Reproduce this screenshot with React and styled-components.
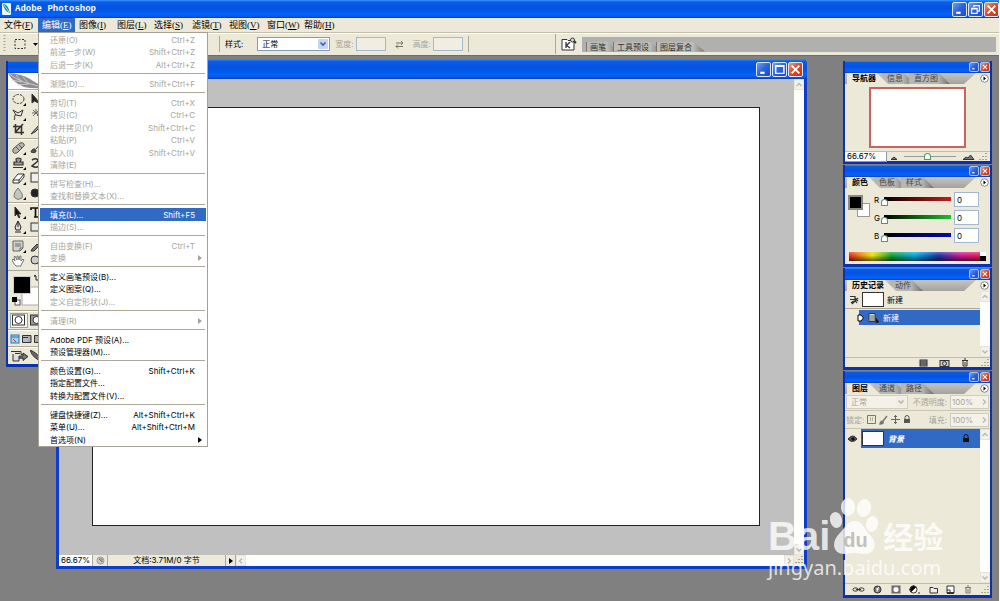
import React from 'react';
import styled, { createGlobalStyle, css } from 'styled-components';

const UI = `Inter, "Noto Sans CJK SC", sans-serif`;
const SONG = `"Liberation Serif", "Noto Sans CJK SC", serif`;
const BEIGE = '#ece9d8';
const NAVY = '#0a32b0';

const GlobalStyle = createGlobalStyle`
  * { box-sizing: border-box; }
  body { margin: 0; background: #808080; font: 8px/12px ${UI}; color: #000; }
  button, input, select { font: inherit; color: inherit; margin: 0; padding: 0; border: 0; border-radius: 0; background: none; }
  ul { margin: 0; padding: 0; list-style: none; }
  svg { display: block; flex: none; }
`;

const titleFill = css`
  background: linear-gradient(#3c94fa 0, #0a5be8 12%, #0453e0 45%, #0562f8 80%, #0656ec 92%, #0438b4 100%);
`;

const Screen = styled.div`
  position: relative;
  display: flex;
  flex-direction: column;
  min-height: 100vh;
  overflow: hidden;
  border-right: 1px solid #f4f4f0;
  border-bottom: 1px solid #b8b8b8;
`;

const AppTitle = styled.header`
  ${titleFill}
  display: flex;
  align-items: center;
  gap: 4px;
  height: 18px;
  padding: 0 0 0 2px;
  color: #fff;
  h1 { flex: 1; margin: 0; font: bold 9px/16px "Liberation Mono", monospace; }
`;

const ControlGroup = styled.div`
  display: flex;
  gap: ${p => p.$gap ?? 2}px;
`;

const WinButton = styled.button`
  display: grid;
  place-items: center;
  width: ${p => p.$size}px;
  height: ${p => p.$size}px;
  border: 1px solid ${p => (p.$size > 12 ? '#dbe6fb' : '#a9c2f2')};
  border-radius: 2px;
  background: ${p => (p.$close
    ? 'linear-gradient(135deg, #f09a80, #d8492a 50%, #b8391e)'
    : 'linear-gradient(135deg, #6f9df8, #2c61dc 50%, #1c4cc8)')};
`;

const MenuBar = styled.nav`
  display: flex;
  height: 15px;
  background: ${BEIGE};
  border-bottom: 1px solid #c2bfae;
  font: 9px/14px ${SONG};
`;

const MenuEntry = styled.div`
  position: relative;
  width: 38px;
  &:nth-child(even) { width: 37px; }
`;

const MenuButton = styled.button`
  width: 100%;
  height: 14px;
  padding-left: 4px;
  text-align: left;
  white-space: nowrap;
  color: ${p => (p.$open ? '#fff' : '#000')};
  background: ${p => (p.$open ? '#316ac5' : 'transparent')};
`;

const Dropdown = styled.div`
  position: absolute;
  z-index: 20;
  top: 14px;
  left: 0;
  width: 170px;
  border: 1px solid #a5a294;
  background: #fff;
  font: 8px/12px ${UI};
`;

const DropGroup = styled.ul`
  padding: 0 1px;
  & + & { position: relative; margin-top: 6px; }
  & + &::before {
    content: '';
    position: absolute;
    top: -4px;
    left: 2px;
    right: 2px;
    height: 1px;
    background: #aca899;
  }
`;

const DropRow = styled.li`
  height: 13px;
  &:nth-child(even) { height: 12px; }
`;

const DropItem = styled.button`
  display: flex;
  justify-content: space-between;
  align-items: center;
  width: 100%;
  height: 100%;
  padding: 0 ${p => (p.$sub ? 4 : 11)}px 0 10px;
  white-space: nowrap;
  color: ${p => (p.$hot ? '#fff' : p.disabled ? '#a6a498' : '#000')};
  background: ${p => (p.$hot ? '#316ac5' : 'transparent')};
`;

const OptionsBar = styled.section`
  display: flex;
  align-items: center;
  height: 23px;
  padding: 0 3px 1px 0;
  background: ${BEIGE};
  border-top: 1px solid #fff;
  border-bottom: 1px solid #6e6e68;
  white-space: nowrap;
`;

const ToolChoice = styled.div`
  display: flex;
  align-items: center;
  gap: 6px;
  width: 219px;
  padding-left: 3px;
`;

const StyleOptions = styled.div`
  display: flex;
  align-items: center;
  width: 250px;
  height: 16px;
  padding-left: 5px;
  border-left: 1px solid #aca899;
  border-right: 1px solid #aca899;
`;

const Field = styled.label`
  display: flex;
  align-items: center;
  gap: ${p => p.$gap ?? 2}px;
  margin-left: ${p => p.$lead ?? 0}px;
  color: ${p => (p.$off ? '#a6a498' : '#000')};
`;

const SelectBox = styled.span`
  position: relative;
  display: block;
  width: ${p => p.$width}px;
  height: 14px;
  border: 1px solid ${p => (p.$off ? '#d0cdbd' : '#7f9db9')};
  background: ${p => (p.$off ? '#f4f2e8' : '#fff')};
  select { display: block; width: 100%; height: 12px; padding-left: 4px; line-height: 12px; appearance: none; opacity: 1; color: inherit; }
  svg { position: absolute; top: 0; right: 0; pointer-events: none; }
`;

const TextBox = styled.input`
  width: ${p => p.$width}px;
  height: ${p => p.$height ?? 14}px;
  padding-left: 2px;
  border: 1px solid #a3b8cc;
  background: ${p => (p.disabled ? '#f0eee2' : '#fff')};
`;

const Swap = styled.button`
  margin: 0 9px;
  color: #77756a;
`;

const BrowseButton = styled.button`
  display: grid;
  place-items: center;
  width: 27px;
  height: 20px;
  margin-left: 86px;
  border-left: 1px solid #aca899;
`;

const PaletteWell = styled.div`
  display: flex;
  flex: 1;
  align-items: flex-end;
  height: 15px;
  padding-left: 4px;
  background: #b0b0ae;
`;

const WellTab = styled.button`
  height: 10px;
  padding: 0 13px 0 3px;
  margin-right: -6px;
  line-height: 10px;
  color: #333;
  background: linear-gradient(to right, #bcbcb8 calc(100% - 12px), #77776f);
  clip-path: polygon(0 0, calc(100% - 12px) 0, 100% 100%, 0 100%);
  border-left: 1px solid #777;
`;

const Workspace = styled.main`
  display: flex;
  flex: 1;
  align-items: stretch;
  padding: 3px 7px 3px 6px;
  background: #808080;
`;

const Toolbox = styled.aside`
  align-self: flex-start;
  width: 46px;
  margin: 2px 4px 0 0;
  border: solid ${NAVY};
  border-width: 0 2px 3px;
  background: ${BEIGE};
`;

const ToolboxTitle = styled.div`
  ${titleFill}
  height: 12px;
`;

const Feather = styled.div`
  height: 17px;
  background: #fff;
  border-bottom: 1px solid #aca899;
`;

const ToolGrid = styled.div`
  display: grid;
  grid-template-columns: 18px 18px;
  grid-auto-rows: ${p => p.$row ?? 15}px;
  padding: 1px 0 1px 2px;
  border-bottom: 1px solid #aca899;
  border-top: 1px solid #fff;
  &:last-child { border-bottom: 0; }
`;

const ToolButton = styled.button`
  display: grid;
  place-items: center;
  border: ${p => (p.$on ? '1px solid #8aa' : '0')};
  background: ${p => (p.$on ? '#f8f8f2' : 'transparent')};
`;

const Swatches = styled.div`
  height: 40px;
  padding: 4px 0 0 3px;
  border-bottom: 1px solid #aca899;
`;

const DocWindow = styled.section`
  display: flex;
  flex: 1;
  flex-direction: column;
  min-width: 0;
  margin: 0 36px 29px 0;
  border: solid #0d3dca;
  border-width: 0 3px 3px;
  border-radius: 5px 5px 0 0;
  background: #c0c0c0;
`;

const DocTitle = styled.header`
  ${titleFill}
  display: flex;
  justify-content: flex-end;
  align-items: center;
  height: 20px;
  margin: 0 -3px;
  padding-right: 4px;
  border-radius: 5px 5px 0 0;
`;

const DocBody = styled.div`
  display: flex;
  flex: 1;
`;

const Pasteboard = styled.div`
  display: flex;
  flex: 1;
  padding: 28px 34px 29px 33px;
`;

const Canvas = styled.div`
  flex: 1;
  border: 1px solid #222;
  background: #fff;
`;

const VScroll = styled.div`
  display: flex;
  flex-direction: column;
  justify-content: space-between;
  width: 10px;
  background: #fefefb;
`;

const ScrollButton = styled.button`
  display: grid;
  place-items: center;
  width: 10px;
  height: 11px;
  border: 1px solid #e6e4da;
  background: #f3f2ea;
`;

const StatusBar = styled.footer`
  display: flex;
  height: 11px;
  line-height: 11px;
  background: ${BEIGE};
  white-space: nowrap;
`;

const StatusCell = styled.div`
  display: grid;
  place-items: center;
  width: ${p => p.$width}px;
  border-right: 1px solid #aca899;
  background: ${p => (p.$white ? '#fff' : 'transparent')};
`;

const HScroll = styled.div`
  display: flex;
  flex: 1;
  justify-content: space-between;
  background: #fefefb;
`;

const Palettes = styled.aside`
  display: flex;
  flex-direction: column;
  gap: 1px;
  width: 149px;
  padding-top: 2px;
`;

const PanelFrame = styled.section`
  display: flex;
  flex-direction: column;
  flex: ${p => (p.$grow ? '1 0 227px' : '0 0 102px')};
  border: solid ${NAVY};
  border-width: 0 2px 3px;
  background: ${BEIGE};
`;

const PanelTitle = styled.header`
  ${titleFill}
  display: flex;
  justify-content: flex-end;
  align-items: center;
  height: 12px;
`;

const TabStrip = styled.div`
  display: flex;
  height: 11px;
  padding-left: 2px;
  background: linear-gradient(#c4c4c0, #a2a29e);
`;

const PanelTab = styled.button`
  position: relative;
  z-index: ${p => (p.$active ? 2 : 1)};
  height: 11px;
  margin-right: -6px;
  padding: 0 12px 0 5px;
  line-height: 11px;
  white-space: nowrap;
  font-weight: ${p => (p.$active ? 600 : 400)};
  color: ${p => (p.$active ? '#000' : '#444')};
  background: ${p => (p.$active ? BEIGE : 'linear-gradient(to right, #b6b6b2 calc(100% - 12px), #6f6f6a)')};
  clip-path: polygon(0 0, calc(100% - 11px) 0, 100% 100%, 0 100%);
`;

const Flyout = styled.button`
  display: flex;
  justify-content: flex-end;
  align-items: center;
  width: 26px;
  height: 11px;
  margin-left: auto;
  padding-right: 1px;
  background: ${BEIGE};
  clip-path: polygon(12px 0, 100% 0, 100% 100%, 0 100%);
`;

const PanelBody = styled.div`
  display: flex;
  flex: 1;
`;

const Thumbnail = styled.div`
  width: 97px;
  height: 61px;
  margin: 3px auto;
  border: 2px solid #c9635f;
  background: #fff;
`;

const PanelFooter = styled.footer`
  display: flex;
  align-items: center;
  justify-content: ${p => p.$justify ?? 'flex-start'};
  gap: ${p => p.$gap ?? 4}px;
  height: ${p => p.$height ?? 10}px;
  padding-left: ${p => p.$pad ?? 0}px;
  border-top: 1px solid #c0bdac;
`;

const ZoomValue = styled.input`
  width: 42px;
  height: 10px;
  padding-left: 2px;
  border: solid #7f9db9;
  border-width: 0 1px 1px 0;
  background: #fff;
  line-height: 9px;
`;

const Range = styled.input.attrs({ type: 'range' })`
  appearance: none;
  width: ${p => p.$width}px;
  height: ${p => p.$height}px;
  background: ${p => p.$fill} no-repeat center ${p => p.$at}px / calc(100% - 6px) ${p => p.$thick}px;
  &::-webkit-slider-thumb {
    appearance: none;
    width: 7px;
    height: 7px;
    margin-top: ${p => p.$drop}px;
    border: 1px solid #4d9a68;
    border-radius: 4px 4px 1px 1px;
    background: #fff;
  }
`;

const SwatchPair = styled.div`
  width: 29px;
  padding: 7px 0 0 3px;
`;

const ColorRows = styled.div`
  display: flex;
  flex-direction: column;
  gap: 3px;
  padding: 4px 10px 0 0;
`;

const ColorRow = styled.label`
  display: flex;
  align-items: center;
  height: 15px;
  span { width: 7px; }
`;

const Spectrum = styled.div`
  display: flex;
  height: 9px;
  margin: 0 4px 3px;
  background:
    linear-gradient(rgba(255,255,255,.3), rgba(255,255,255,0) 40%, rgba(0,0,0,.6)),
    linear-gradient(to right, #e02820, #f0e000 17%, #10a030 31%, #00a8e0 48%, #1838a8 65%, #d01890 82%, #e82040);
  &::after { content: ''; width: 6px; margin-left: auto; background: linear-gradient(#fff 50%, #000 50%); }
`;

const ListArea = styled.div`
  flex: 1;
`;

const HistoryRow = styled.div`
  display: flex;
  align-items: center;
  gap: ${p => p.$gap}px;
  height: ${p => p.$height}px;
  padding-left: ${p => p.$pad}px;
  border-bottom: ${p => (p.$on ? 0 : 1)}px solid #aca899;
  margin-bottom: ${p => (p.$on ? 0 : 1)}px;
  color: ${p => (p.$on ? '#fff' : '#000')};
  background: ${p => (p.$on ? `linear-gradient(to right, ${BEIGE} 14px, #316ac5 14px)` : 'transparent')};
`;

const Preview = styled.div`
  width: 22px;
  height: 15px;
  border: 1px solid #333;
  background: #fff;
`;

const LayerOptions = styled.div`
  display: flex;
  align-items: center;
  gap: 3px;
  height: ${p => p.$height}px;
  padding: 0 1px;
  border-bottom: 1px solid #c8c5b4;
  color: #a6a498;
  white-space: nowrap;
`;

const PercentBox = styled.span`
  display: flex;
  align-items: center;
  justify-content: space-between;
  width: 39px;
  height: 14px;
  border: 1px solid #d0cdbd;
  background: #f4f2e8;
  input { width: 26px; padding-left: 1px; }
`;

const PercentLabel = styled.label`
  margin-left: auto;
`;

const LayerRow = styled.div`
  display: flex;
  align-items: center;
  height: 19px;
  padding-right: 10px;
  color: #fff;
  background: #316ac5;
  em { flex: 1; padding-left: 4px; font-weight: 600; }
`;

const EyeButton = styled.button`
  display: grid;
  place-items: center;
  width: 16px;
  height: 19px;
  margin-right: 1px;
  background: ${BEIGE};
`;

const Watermark = styled.div`
  position: absolute;
  z-index: 30;
  right: 53px;
  bottom: 21px;
  width: 178px;
  color: rgba(255, 255, 255, 0.78);
  pointer-events: none;
`;

const Brand = styled.div`
  display: flex;
  align-items: flex-end;
  height: 57px;
  margin-bottom: 1px;
  font: bold 40px/38px "Liberation Sans", sans-serif;
`;

const Paw = styled.div`
  position: relative;
  margin: 0 5px 0 0;
  span { position: absolute; left: 13px; bottom: 3px; font-size: 20px; line-height: 24px; color: rgba(184, 182, 172, 0.85); }
`;

const BrandSuffix = styled.span`
  font: bold 30px/40px "Noto Sans CJK SC", sans-serif;
`;

const Address = styled.div`
  font: 20px/24px "Noto Sans", sans-serif;
`;

const Glyph = ({ w = 12, h = 12, children }) => (
  <svg width={w} height={h} viewBox={`0 0 ${w} ${h}`} fill="none" stroke="#333" strokeWidth="1" aria-hidden="true">
    {children}
  </svg>
);

const Controls = ({ size, maximize, gap }) => (
  <ControlGroup $gap={gap}>
    <WinButton $size={size} aria-label="minimize">
      <svg width={size - 4} height={size - 4} viewBox="0 0 10 10"><path d="M2 8h4" stroke="#fff" strokeWidth="2" /></svg>
    </WinButton>
    {maximize && (
      <WinButton $size={size} aria-label="resize">
        <svg width={size - 4} height={size - 4} viewBox="0 0 10 10" fill="none" stroke="#fff">
          {maximize === 'restore'
            ? <path d="M3.500 3V1.500h5v5H7M1.500 4h5v4.500h-5zM1 4.500h6" />
            : <path d="M1.500 1.500h7.500v7h-7.500zM1 2h8" strokeWidth="1.300" />}
        </svg>
      </WinButton>
    )}
    <WinButton $size={size} $close aria-label="close">
      <svg width={size - 4} height={size - 4} viewBox="0 0 10 10"><path d="M1.500 1.500l7 7M8.500 1.500l-7 7" stroke="#fff" strokeWidth="1.700" /></svg>
    </WinButton>
  </ControlGroup>
);

const CHEVRONS = {
  down: 'M1.500 2.500l2.500 2.500 2.500-2.500',
  up: 'M1.500 5l2.500-2.500L6.500 5',
  left: 'M5 1.500L2.500 4 5 6.500',
  right: 'M3 1.500L5.500 4 3 6.500',
};

const Chevron = ({ d = 'down' }) => (
  <svg width="8" height="8" viewBox="0 0 8 8" fill="none" stroke="#b9b7aa" strokeWidth="1.300"><path d={CHEVRONS[d]} /></svg>
);

const DropArrow = ({ off }) => (
  <svg width="12" height="12" viewBox="0 0 12 12">
    <rect x="1" y="1" width="10" height="10" rx="1" fill={off ? '#f0eee4' : '#c4d5fb'} />
    <path d="M3.500 4.500L6 7l2.500-2.500" fill="none" stroke={off ? '#bbb8a8' : '#4d6185'} strokeWidth="1.600" />
  </svg>
);

const Triangle = ({ color = '#000' }) => <svg width="4" height="6" viewBox="0 0 4 6"><path d="M0 0l4 3-4 3z" fill={color} /></svg>;

const Grip = () => (
  <Glyph w={10} h={9}><path d="M8 1v1M8 4v1M8 7v1M5 4v1M5 7v1M2 7v1" stroke="#aaa797" strokeWidth="2" /></Glyph>
);

const corner = <path d="M14 10v3h-3z" fill="#000" stroke="none" />;
const TOOL_ICONS = {
  ellipse: <>{corner}<ellipse cx="6.500" cy="6" rx="5.500" ry="4.500" strokeDasharray="2.500 1" /></>,
  move: <path d="M2 1v9l2.500-2 4 2-2-4z" fill="#222" />,
  lasso: <>{corner}<path d="M1 2l5 3 5-3-2 6-5-1zM4 7c-2 0-2 2-1 3l-1 2" /></>,
  wand: <path d="M6 1v4M2 5h8M3 2l6 6M9 2L3 8M7 7l4 4" stroke="#666" />,
  crop: <path d="M3.500 1v8.500H12M1 3.500h8.500V12M11 1L4 8.500" strokeWidth="1.600" />,
  slice: <path d="M1 11L9 2l2 1-6 6z" fill="#999" />,
  heal: <>{corner}<path d="M1 10q-1-2 1-4l6-5q3-1 4 1 1 2-1 3l-6 6q-3 1-4-1z" fill="#b4b4b0" stroke="#555" /><path d="M4 5l4 4M7 3l3 3" stroke="#555" /></>,
  brush: <path d="M1 10c2-5 5-3 5-1 0 2-3 2-5 1zM6 7l5-6" fill="#555" />,
  stamp: <>{corner}<path d="M4 2q2.500-2 5 0 0 2-1 3h3v3H2V5h3Q4 4 4 2zM1 10.500h10" fill="#999" strokeWidth="1.200" /></>,
  historyBrush: <path d="M2 3q5-3 6 1l-6 5q5 3 8-1" strokeWidth="1.500" />,
  eraser: <>{corner}<path d="M1 8l5-6h6l-5 6zM1 8v3h6V8M7 11l5-6V2" fill="#fff" /></>,
  gradient: <rect x="1" y="1" width="10" height="9" fill="#eee" />,
  blur: <>{corner}<path d="M6 1q6 7 4 10-4 3-7 0Q0 8 6 1z" fill="#c4c4c0" stroke="#777" /></>,
  dodge: <path d="M1 6a4 4 0 108 0 4 4 0 10-8 0M8 3l4-2" fill="#222" />,
  select: <>{corner}<path d="M3 1v9l2-2 2 4 1-1-2-3h3z" fill="#111" /></>,
  type: <path d="M1 4V2h9v2M5.500 2v9M4 11h4" stroke="#111" strokeWidth="1.700" />,
  pen: <>{corner}<path d="M6 0l3 6-1 3H4L3 6zM3 11h6M6 1v5" fill="#ddd" stroke="#222" /></>,
  shape: <rect x="1" y="2" width="10" height="8" fill="#e8e8e8" />,
  notes: <>{corner}<path d="M1 1h10v7l-3 3H1zM11 8H8v3M3 4h6M3 6h6" fill="#d4d4d0" stroke="#666" /></>,
  dropper: <path d="M1 11l1-2 5-5 2 2-5 5zM8 2l3 3" fill="#777" />,
  hand: <path d="M4 11Q1 8 0 5l1-1 2 2-1-4 1-1 2 4V1h1l1 4 1-4h1v5l2-2 1 1-3 5v1z" fill="#fff" stroke="#777" />,
  zoom: <><circle cx="5" cy="5" r="4" fill="#ccc" /><path d="M8 8l4 4" strokeWidth="2" /></>,
  standard: <><rect x=".5" y="1" width="12" height="10" fill="#fff" /><circle cx="6.500" cy="6" r="3.500" /></>,
  quick: <><rect x=".5" y="1" width="12" height="10" fill="#999" /><circle cx="6.500" cy="6" r="3.500" fill="#fff" /></>,
};

const ToolIcon = ({ name }) => <Glyph w={14} h={13}>{TOOL_ICONS[name]}</Glyph>;

const TOOLS = [
  ['ellipse', 'move', 'lasso', 'wand', 'crop', 'slice'],
  ['heal', 'brush', 'stamp', 'historyBrush', 'eraser', 'gradient', 'blur', 'dodge'],
  ['select', 'type', 'pen', 'shape'],
  ['notes', 'dropper', 'hand', 'zoom'],
];

const MENUS = [['文件', 'F'], ['编辑', 'E'], ['图像', 'I'], ['图层', 'L'], ['选择', 'S'], ['滤镜', 'T'], ['视图', 'V'], ['窗口', 'W'], ['帮助', 'H']];

const off = true;
const EDIT_MENU = [
  [{ t: '还原(O)', k: 'Ctrl+Z', off }, { t: '前进一步(W)', k: 'Shift+Ctrl+Z', off }, { t: '后退一步(K)', k: 'Alt+Ctrl+Z', off }],
  [{ t: '渐隐(D)...', k: 'Shift+Ctrl+F', off }],
  [
    { t: '剪切(T)', k: 'Ctrl+X', off }, { t: '拷贝(C)', k: 'Ctrl+C', off }, { t: '合并拷贝(Y)', k: 'Shift+Ctrl+C', off },
    { t: '粘贴(P)', k: 'Ctrl+V', off }, { t: '贴入(I)', k: 'Shift+Ctrl+V', off }, { t: '清除(E)', off },
  ],
  [{ t: '拼写检查(H)...', off }, { t: '查找和替换文本(X)...', off }],
  [{ t: '填充(L)...', k: 'Shift+F5', hot: true }, { t: '描边(S)...', off }],
  [{ t: '自由变换(F)', k: 'Ctrl+T', off }, { t: '变换', sub: true, off }],
  [{ t: '定义画笔预设(B)...' }, { t: '定义图案(Q)...' }, { t: '定义自定形状(J)...', off }],
  [{ t: '清理(R)', sub: true, off }],
  [{ t: 'Adobe PDF 预设(A)...' }, { t: '预设管理器(M)...' }],
  [{ t: '颜色设置(G)...', k: 'Shift+Ctrl+K' }, { t: '指定配置文件...' }, { t: '转换为配置文件(V)...' }],
  [{ t: '键盘快捷键(Z)...', k: 'Alt+Shift+Ctrl+K' }, { t: '菜单(U)...', k: 'Alt+Shift+Ctrl+M' }, { t: '首选项(N)', sub: true }],
];

const EditMenu = () => (
  <Dropdown>
    {EDIT_MENU.map((group, i) => (
      <DropGroup key={i}>
        {group.map(item => (
          <DropRow key={item.t}>
            <DropItem disabled={item.off} $hot={item.hot} $sub={item.sub}>
              <span>{item.t}</span>
              {item.k && <span>{item.k}</span>}
              {item.sub && <Triangle color={item.off ? '#a6a498' : '#000'} />}
            </DropItem>
          </DropRow>
        ))}
      </DropGroup>
    ))}
  </Dropdown>
);

const Panel = ({ tabs, grow, children }) => (
  <PanelFrame $grow={grow}>
    <PanelTitle><Controls size={10} gap={1} /></PanelTitle>
    <TabStrip>
      {tabs.map((tab, i) => <PanelTab key={tab} $active={i === 0}>{tab}</PanelTab>)}
      <Flyout aria-label="panel menu">
        <svg width="9" height="9" viewBox="0 0 9 9"><circle cx="4.500" cy="4.500" r="3.800" fill="#fff" stroke="#888" /><path d="M3.500 2.500l2.500 2-2.500 2z" /></svg>
      </Flyout>
    </TabStrip>
    {children}
  </PanelFrame>
);

const ScrollColumn = () => (
  <VScroll>
    <ScrollButton aria-label="scroll up"><Chevron d="up" /></ScrollButton>
    <ScrollButton aria-label="scroll down"><Chevron /></ScrollButton>
  </VScroll>
);

const CHANNELS = [['R', '#c81c1c'], ['G', '#1cc02c'], ['B', '#0808b0']];

const Lock = ({ color = '#555' }) => (
  <Glyph w={8} h={9}><path d="M2 4V2.500a2 2 0 014 0V4" stroke={color} /><rect x="1.500" y="4.500" width="5" height="3" fill={color} stroke={color} /></Glyph>
);

export default function App() {
  return (
    <Screen>
      <GlobalStyle />
      <AppTitle>
        <svg width="9" height="12" viewBox="0 0 9 12">
          <rect width="9" height="12" rx="1" fill="#e8f6f8" />
          <path d="M1 1q5 0 7 9-6-2-7-9z" fill="#158c8c" /><path d="M2 2l5 7" stroke="#fff" strokeWidth=".7" />
        </svg>
        <h1>Adobe Photoshop</h1>
        <Controls size={15} maximize="restore" gap={1} />
      </AppTitle>

      <MenuBar>
        {MENUS.map(([label, key]) => (
          <MenuEntry key={key}>
            <MenuButton $open={key === 'E'}>{label}(<u>{key}</u>)</MenuButton>
            {key === 'E' && <EditMenu />}
          </MenuEntry>
        ))}
      </MenuBar>

      <OptionsBar>
        <ToolChoice>
          <Glyph w={4} h={18}><path d="M1.500 0v18" stroke="#a7a495" strokeDasharray="1 2" strokeWidth="2" /></Glyph>
          <Glyph w={14} h={12}><rect x="2" y="1.500" width="10" height="9" strokeDasharray="2 1.500" /></Glyph>
          <svg width="5" height="3" viewBox="0 0 5 3"><path d="M0 0h5L2.500 3z" /></svg>
        </ToolChoice>
        <StyleOptions>
          <Field $gap={14}>
            样式:
            <SelectBox $width={73}>
              <select defaultValue="正常"><option>正常</option></select>
              <DropArrow />
            </SelectBox>
          </Field>
          <Field $off $lead={5}>宽度:<TextBox $width={30} disabled /></Field>
          <Swap aria-label="swap">
            <Glyph w={9} h={9}><path d="M1 3h7M6 1l2 2-2 2M8 6.500H1M3 4.500l-2 2 2 2" stroke="#77756a" /></Glyph>
          </Swap>
          <Field $off>高度:<TextBox $width={30} disabled /></Field>
        </StyleOptions>
        <BrowseButton aria-label="browse">
          <Glyph w={16} h={14}>
            <path d="M1 2.500h5l1 1h6V13H1z" fill="#fff" /><path d="M5 5v6M5 9l4-4M5 8l4 3" strokeWidth="1.300" />
            <circle cx="11.500" cy="3" r="2" fill="#ddd" /><path d="M13 4l2 2" strokeWidth="2" />
          </Glyph>
        </BrowseButton>
        <PaletteWell>
          <WellTab>画笔</WellTab><WellTab>工具预设</WellTab><WellTab>图层复合</WellTab>
        </PaletteWell>
      </OptionsBar>

      <Workspace>
        <Toolbox>
          <ToolboxTitle />
          <Feather>
            <svg width="42" height="16" viewBox="0 0 42 16">
              <path d="M0 0q14 1 22 6 6 4 16 9-14 1-22-1Q4 9 0 0z" fill="#8d8d92" />
              <path d="M0 0q14 12 40 14M8 2l5 6M15 4l6 7M4 7l10 2M9 12l12-1" stroke="#d8d8dc" strokeWidth=".8" fill="none" />
            </svg>
          </Feather>
          {TOOLS.map((group, i) => (
            <ToolGrid key={i}>
              {group.map(name => <ToolButton key={name} aria-label={name}><ToolIcon name={name} /></ToolButton>)}
            </ToolGrid>
          ))}
          <Swatches>
            <svg width="36" height="34" viewBox="0 0 36 34">
              <rect x="11" y="12" width="19" height="18" fill="#fff" stroke="#aaa" />
              <rect x="2.500" y="1.500" width="17" height="17" fill="#000" stroke="#ccc" />
              <rect x="4" y="25" width="5" height="5" fill="#fff" stroke="#555" /><rect x="1" y="22" width="5" height="5" />
              <path d="M25 5V1h-2M23 1l2-1M25 5l4 0" stroke="#222" fill="none" />
            </svg>
          </Swatches>
          <ToolGrid $row={15}>
            <ToolButton $on aria-label="standard mode"><ToolIcon name="standard" /></ToolButton>
            <ToolButton aria-label="quick mask"><ToolIcon name="quick" /></ToolButton>
          </ToolGrid>
          <ToolGrid $row={13}>
            <ToolButton aria-label="screen modes">
              <Glyph w={18} h={10}><rect x="1" y="1" width="8" height="8" fill="#a8d0f0" stroke="#2878b0" /><path d="M1 3h8" stroke="#2878b0" /><path d="M3 5l3 3" stroke="#c33" /><path d="M18 1.500h-5.500v7H18M12.500 3.500H18" fill="#bbb" /></Glyph>
            </ToolButton>
            <ToolButton aria-label="full screen">
              <Glyph w={18} h={10}><path d="M0 1.500h3v7H0M6.500 1.500h7v7h-7z" fill="#aaa" /></Glyph>
            </ToolButton>
          </ToolGrid>
          <ToolGrid $row={14}>
            <ToolButton aria-label="jump to">
              <Glyph w={18} h={13}><path d="M1 1.500h10v3h2M3 4v7h6V8h4M5 3.500h5" fill="#ddd" /><path d="M9 6h4V3l5 3.500-5 4V8H9z" fill="#777" /></Glyph>
            </ToolButton>
            <ToolButton aria-label="image ready">
              <Glyph w={14} h={12}><path d="M0 0q8 3 12 11Q3 9 0 0z" fill="#666" /></Glyph>
            </ToolButton>
          </ToolGrid>
        </Toolbox>

        <DocWindow>
          <DocTitle><Controls size={15} maximize="max" gap={1} /></DocTitle>
          <DocBody>
            <Pasteboard><Canvas /></Pasteboard>
            <ScrollColumn />
          </DocBody>
          <StatusBar>
            <StatusCell $width={34} $white>66.67%</StatusCell>
            <StatusCell $width={15}>
              <Glyph w={9} h={9}><circle cx="4.500" cy="4.500" r="3.500" fill="#ccc" stroke="#999" /><path d="M3 3h3v3L3 3" stroke="#777" /></Glyph>
            </StatusCell>
            <StatusCell $width={118}>文档:3.71M/0 字节</StatusCell>
            <StatusCell $width={10}><Triangle /></StatusCell>
            <HScroll>
              <ScrollButton aria-label="scroll left"><Chevron d="left" /></ScrollButton>
              <ScrollButton aria-label="scroll right"><Chevron d="right" /></ScrollButton>
            </HScroll>
            <Grip />
          </StatusBar>
        </DocWindow>

        <Palettes>
          <Panel tabs={['导航器', '信息', '直方图']}>
            <PanelBody><Thumbnail /></PanelBody>
            <PanelFooter $gap={3}>
              <ZoomValue aria-label="zoom" defaultValue="66.67%" />
              <Glyph w={8} h={8}><path d="M1 6.500h6L4 4z" fill="#777" /></Glyph>
              <Range aria-label="zoom level" defaultValue={46} $width={58} $height={9} $fill="linear-gradient(#9c998a, #9c998a)" $at={4} $thick={1} $drop={0} />
              <Glyph w={13} h={8}><path d="M1 6.500h11L8.500 2 6 5 4 4z" fill="#777" /></Glyph>
              <Grip />
            </PanelFooter>
          </Panel>

          <Panel tabs={['颜色', '色板', '样式']}>
            <PanelBody>
              <SwatchPair>
                <svg width="23" height="23" viewBox="0 0 23 23">
                  <rect x="9.500" y="8.500" width="12" height="13" fill="#fff" stroke="#999" />
                  <rect x="1" y="1" width="13" height="13" fill="#000" stroke="#888" strokeWidth="2" />
                </svg>
              </SwatchPair>
              <ColorRows>
                {CHANNELS.map(([name, color]) => (
                  <ColorRow key={name}>
                    <span>{name}</span>
                    <Range aria-label={name} defaultValue={0} $width={73} $height={14} $fill={`linear-gradient(to right, #000, ${color})`} $at={4} $thick={4} $drop={6} />
                    <TextBox aria-label={`${name} value`} $width={25} $height={15} defaultValue="0" />
                  </ColorRow>
                ))}
              </ColorRows>
            </PanelBody>
            <Spectrum />
          </Panel>

          <Panel tabs={['历史记录', '动作']}>
            <PanelBody>
              <ListArea>
                <HistoryRow $gap={3} $height={18} $pad={4}>
                  <Glyph w={10} h={10}><path d="M1 1.500h5v3H1M3 9l6-6M2 8q4-4 6 0M6 3l3 3" strokeWidth="1.200" /></Glyph>
                  <Preview /><span>新建</span>
                </HistoryRow>
                <HistoryRow $on $gap={4} $height={15} $pad={12}>
                  <svg width="7" height="8" viewBox="0 0 7 8"><path d="M1 1h3l2.500 3L4 7H1z" fill="#fff" stroke="#000" /></svg>
                  <Glyph w={11} h={11}><path d="M1 1.500h6v8H1z" fill="#ddd" /><path d="M2 4h4M2 6h4M2 8h4" stroke="#666" /><path d="M8 6v5l3-1z" fill="#000" /></Glyph>
                  <span>新建</span>
                </HistoryRow>
              </ListArea>
              <ScrollColumn />
            </PanelBody>
            <PanelFooter $justify="flex-end" $gap={11}>
              <Glyph w={9} h={8}><rect x="1" y="1" width="7" height="6" fill="#999" /><path d="M1 3h7M1 5h7" /></Glyph>
              <Glyph w={11} h={8}><rect x="1" y="1.500" width="9" height="6" fill="#ccc" /><circle cx="5.500" cy="4.500" r="2" /></Glyph>
              <Glyph w={8} h={9}><path d="M1 2.500h6M3 1h2M2 3v5h4V3M4 4v3" /></Glyph>
              <Grip />
            </PanelFooter>
          </Panel>

          <Panel tabs={['图层', '通道', '路径']} grow>
            <LayerOptions $height={17}>
              <SelectBox $width={62} $off>
                <select aria-label="blend mode" defaultValue="正常" disabled><option>正常</option></select>
                <DropArrow off />
              </SelectBox>
              <PercentLabel htmlFor="opacity">不透明度:</PercentLabel>
              <PercentBox><input id="opacity" defaultValue="100%" disabled /><Chevron d="right" /></PercentBox>
            </LayerOptions>
            <LayerOptions $height={18}>
              <span>锁定:</span>
              <Glyph w={9} h={9}><path d="M.5.5h8v8h-8zM3 3h1M5 5h1M5 3h1M3 5h1" stroke="#777" /></Glyph>
              <Glyph w={9} h={10}><path d="M1 9c1-4 4-3 3-1 0 1-2 1-3 1zM4 6l4-5" fill="#777" stroke="#777" strokeWidth="1.400" /></Glyph>
              <Glyph w={9} h={9}><path d="M4.500 0v9M0 4.500h9M3 2l1.500-1.500L6 2M3 7l1.500 1.500L6 7" stroke="#666" /></Glyph>
              <Lock />
              <PercentLabel htmlFor="fill">填充:</PercentLabel>
              <PercentBox><input id="fill" defaultValue="100%" disabled /><Chevron d="right" /></PercentBox>
            </LayerOptions>
            <PanelBody>
              <ListArea>
                <LayerRow>
                  <EyeButton aria-label="visibility">
                    <Glyph w={10} h={8}><path d="M0 4q5-6 9 0-5 5-9 0z" fill="#555" /><circle cx="5" cy="4" r="1.500" fill="#000" /></Glyph>
                  </EyeButton>
                  <Preview /><em>背景</em><Lock color="#111" />
                </LayerRow>
              </ListArea>
              <ScrollColumn />
            </PanelBody>
            <PanelFooter $justify="space-between" $height={12} $pad={7}>
              <Glyph w={13} h={7}><rect x="1" y="2" width="5" height="3" rx="1.500" /><rect x="7" y="2" width="5" height="3" rx="1.500" /><path d="M4 3.500h5" /></Glyph>
              <Glyph w={9} h={9}><circle cx="4.500" cy="4.500" r="3.500" fill="#777" /><path d="M6 2q-2 0-2 5M3 4h3" stroke="#fff" /></Glyph>
              <Glyph w={10} h={9}><rect x="1" y="1" width="8" height="7" fill="#777" stroke="#666" /><circle cx="5" cy="4.500" r="2.500" fill="#fff" stroke="none" /></Glyph>
              <Glyph w={11} h={9}><circle cx="4.500" cy="4.500" r="3.500" fill="#fff" /><path d="M2 7A3.500 3.500 0 017 2z" fill="#000" /><path d="M9 8h2" /></Glyph>
              <Glyph w={9} h={8}><path d="M1 1.500h3l1 1h3.500V7H1z" fill="#eee" /></Glyph>
              <Glyph w={9} h={9}><path d="M1 1h7v7H1zM1 5h3v3" fill="#fff" /><path d="M1 8h7" strokeWidth="2" /></Glyph>
              <Glyph w={8} h={9}><path d="M1 2.500h6M3 1h2M2 3v5h4V3M4 4v3" stroke="#777" /></Glyph>
              <Grip />
            </PanelFooter>
          </Panel>
        </Palettes>
      </Workspace>

      <Watermark>
        <Brand>
          <span>Bai</span>
          <Paw>
            <svg width="48" height="57" viewBox="0 0 48 57" fill="currentColor">
              <ellipse cx="6" cy="22" rx="6" ry="8" transform="rotate(-12 6 22)" />
              <ellipse cx="18" cy="9" rx="7" ry="9" />
              <ellipse cx="34" cy="10" rx="7" ry="9" transform="rotate(12 34 10)" />
              <ellipse cx="42" cy="26" rx="6" ry="8" transform="rotate(12 42 26)" />
              <path d="M25 23c8 0 9 8 14 13 9 8 7 20-4 20-4 0-6-1-10-1s-6 1-11 1C3 56 1 44 9 36c6-6 8-13 16-13z" />
            </svg>
            <span>du</span>
          </Paw>
          <BrandSuffix>经验</BrandSuffix>
        </Brand>
        <Address>jingyan.baidu.com</Address>
      </Watermark>
    </Screen>
  );
}
